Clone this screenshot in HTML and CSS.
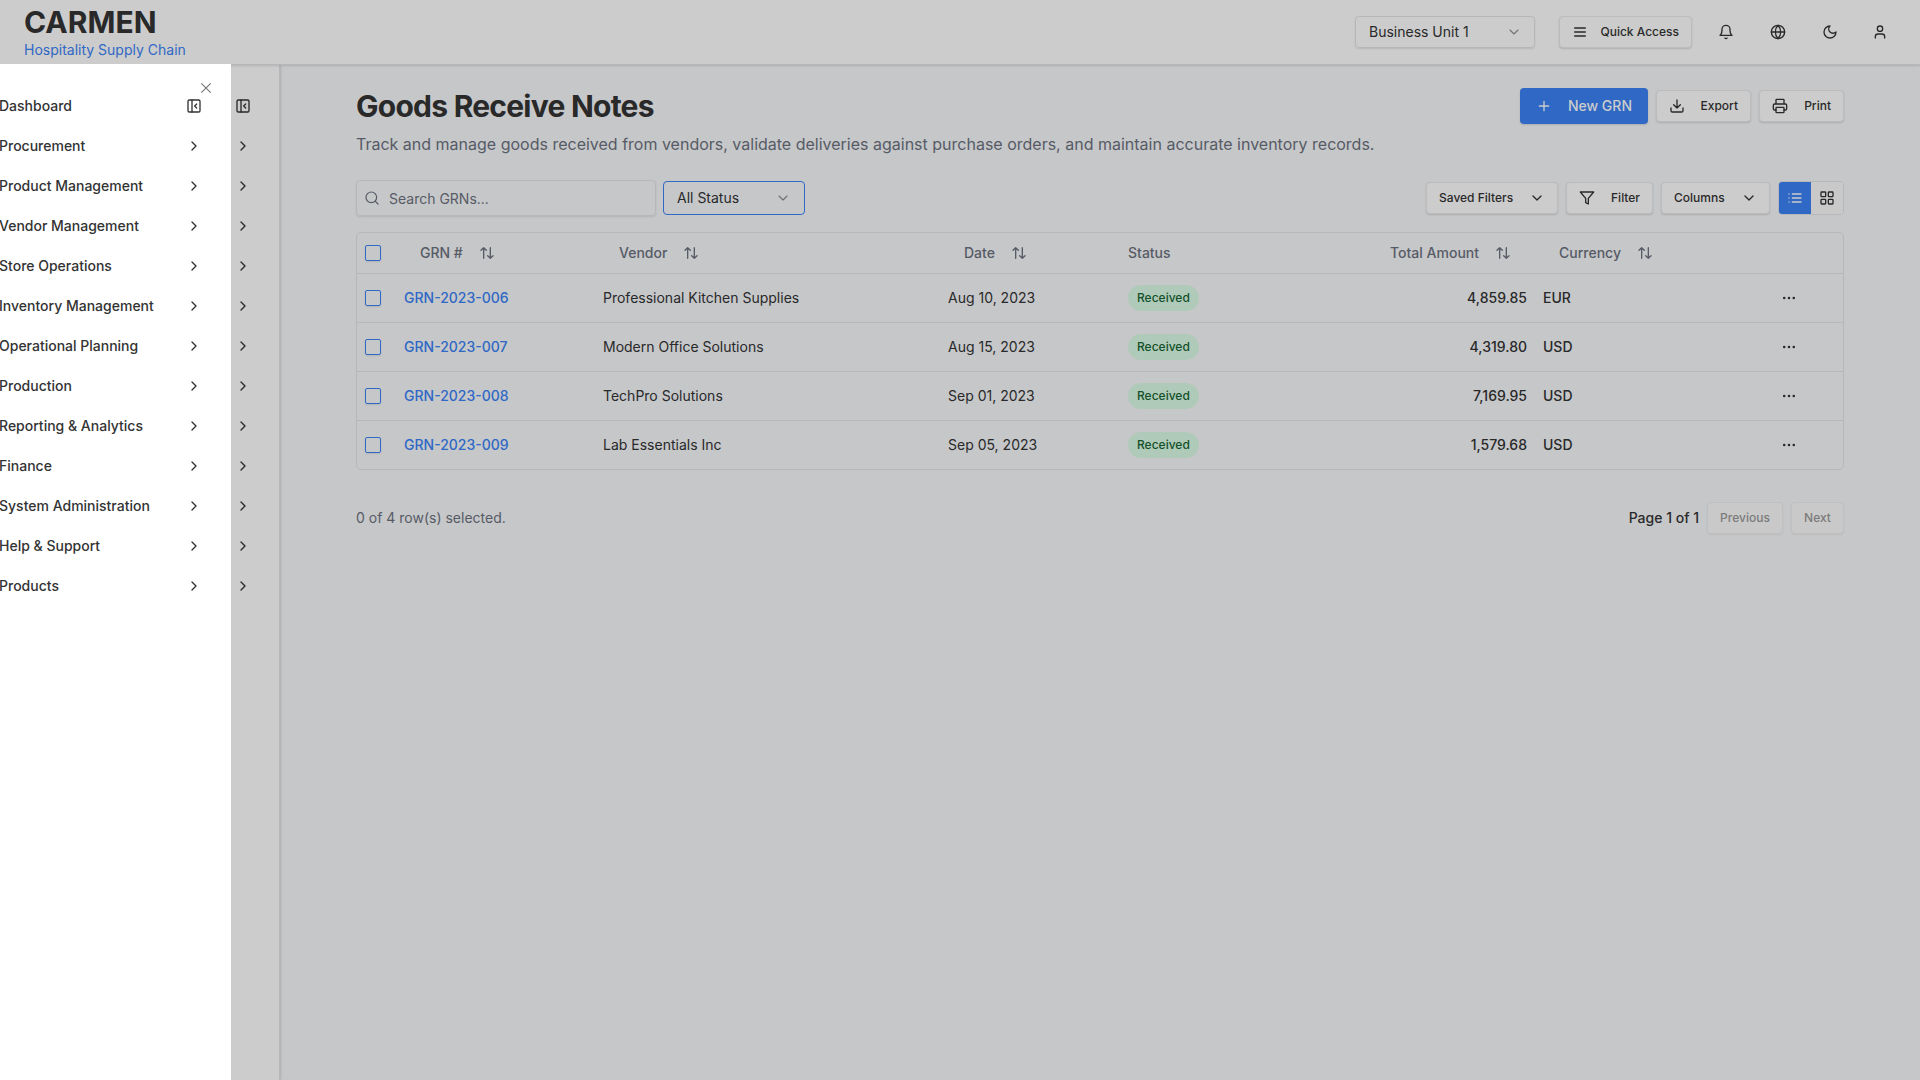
FILE: index.html
```
<!DOCTYPE html>
<html lang="en">
<head>
<meta charset="utf-8">
<title>Goods Receive Notes</title>
<link rel="stylesheet" href="styles.css">
</head>
<body>
<svg class="sprite" aria-hidden="true">
  <symbol id="chev-r" viewBox="0 0 24 24"><path d="m9 18 6-6-6-6"/></symbol>
  <symbol id="chev-d" viewBox="0 0 24 24"><path d="m6 9 6 6 6-6"/></symbol>
  <symbol id="panel" viewBox="0 0 24 24"><rect width="18" height="18" x="3" y="3" rx="2"/><path d="M9 3v18M16 15l-3-3 3-3"/></symbol>
  <symbol id="bell" viewBox="0 0 24 24"><path d="M6 8a6 6 0 0 1 12 0c0 7 3 9 3 9H3s3-2 3-9"/><path d="M10.3 21a1.94 1.94 0 0 0 3.4 0"/></symbol>
  <symbol id="globe" viewBox="0 0 24 24"><circle cx="12" cy="12" r="10"/><path d="M12 2a14.5 14.5 0 0 0 0 20 14.5 14.5 0 0 0 0-20M2 12h20"/></symbol>
  <symbol id="moon" viewBox="0 0 24 24"><path d="M12 3a6 6 0 0 0 9 9 9 9 0 1 1-9-9Z"/></symbol>
  <symbol id="user" viewBox="0 0 24 24"><path d="M19 21v-2a4 4 0 0 0-4-4H9a4 4 0 0 0-4 4v2"/><circle cx="12" cy="7" r="4"/></symbol>
  <symbol id="menu" viewBox="0 0 24 24"><path d="M4 12h16M4 6h16M4 18h16"/></symbol>
  <symbol id="plus" viewBox="0 0 24 24"><path d="M5 12h14M12 5v14"/></symbol>
  <symbol id="download" viewBox="0 0 24 24"><path d="M21 15v4a2 2 0 0 1-2 2H5a2 2 0 0 1-2-2v-4M7 10l5 5 5-5M12 15V3"/></symbol>
  <symbol id="printer" viewBox="0 0 24 24"><path d="M6 18H4a2 2 0 0 1-2-2v-5a2 2 0 0 1 2-2h16a2 2 0 0 1 2 2v5a2 2 0 0 1-2 2h-2M6 9V3a1 1 0 0 1 1-1h10a1 1 0 0 1 1 1v6"/><rect x="6" y="14" width="12" height="8" rx="1"/></symbol>
  <symbol id="search" viewBox="0 0 24 24"><circle cx="11" cy="11" r="8"/><path d="m21 21-4.3-4.3"/></symbol>
  <symbol id="filter" viewBox="0 0 24 24"><path d="M22 3H2l8 9.46V19l4 2v-8.54L22 3z"/></symbol>
  <symbol id="list" viewBox="0 0 24 24"><path d="M8 6h13M8 12h13M8 18h13M3 6h.01M3 12h.01M3 18h.01"/></symbol>
  <symbol id="grid" viewBox="0 0 24 24"><rect x="3" y="3" width="7" height="7" rx="1"/><rect x="14" y="3" width="7" height="7" rx="1"/><rect x="14" y="14" width="7" height="7" rx="1"/><rect x="3" y="14" width="7" height="7" rx="1"/></symbol>
  <symbol id="sort" viewBox="0 0 24 24"><path d="m21 16-4 4-4-4M17 20V4M3 8l4-4 4 4M7 4v16"/></symbol>
  <symbol id="dots" viewBox="0 0 15 15"><circle cx="3" cy="7.500" r="1.200"/><circle cx="7.500" cy="7.500" r="1.200"/><circle cx="12" cy="7.500" r="1.200"/></symbol>
  <symbol id="cross" viewBox="0 0 24 24"><path d="M5 5l14 14M19 5l-14 14"/></symbol>
</svg>

<header class="topbar">
  <div class="brand">
    <div class="brand-name">CARMEN</div>
    <div class="brand-sub">Hospitality Supply Chain</div>
  </div>
  <div class="top-tools">
    <div class="select unit"><span>Business Unit 1</span><svg class="icon thin"><use href="#chev-d"/></svg></div>
    <button class="btn quick"><svg class="icon"><use href="#menu"/></svg>Quick Access</button>
    <div class="top-icons">
      <svg class="icon"><use href="#bell"/></svg>
      <svg class="icon"><use href="#globe"/></svg>
      <svg class="icon"><use href="#moon"/></svg>
      <svg class="icon user"><use href="#user"/></svg>
    </div>
  </div>
</header>

<div class="body">
  <aside class="rail">
    <svg class="icon"><use href="#panel"/></svg>
    <svg class="icon"><use href="#chev-r"/></svg>
    <svg class="icon"><use href="#chev-r"/></svg>
    <svg class="icon"><use href="#chev-r"/></svg>
    <svg class="icon"><use href="#chev-r"/></svg>
    <svg class="icon"><use href="#chev-r"/></svg>
    <svg class="icon"><use href="#chev-r"/></svg>
    <svg class="icon"><use href="#chev-r"/></svg>
    <svg class="icon"><use href="#chev-r"/></svg>
    <svg class="icon"><use href="#chev-r"/></svg>
    <svg class="icon"><use href="#chev-r"/></svg>
    <svg class="icon"><use href="#chev-r"/></svg>
    <svg class="icon"><use href="#chev-r"/></svg>
  </aside>

  <main class="main">
    <div class="title-row">
      <h1>Goods Receive Notes</h1>
      <div class="actions">
        <button class="btn primary"><svg class="icon"><use href="#plus"/></svg>New GRN</button>
        <button class="btn export"><svg class="icon"><use href="#download"/></svg>Export</button>
        <button class="btn print"><svg class="icon"><use href="#printer"/></svg>Print</button>
      </div>
    </div>
    <p class="lead">Track and manage goods received from vendors, validate deliveries against purchase orders, and maintain accurate inventory records.</p>

    <div class="toolbar">
      <div class="search"><svg class="icon"><use href="#search"/></svg><span>Search GRNs...</span></div>
      <div class="select status"><span>All Status</span><svg class="icon thin"><use href="#chev-d"/></svg></div>
      <div class="filters">
        <button class="btn saved">Saved Filters<svg class="icon"><use href="#chev-d"/></svg></button>
        <button class="btn filter"><svg class="icon"><use href="#filter"/></svg>Filter</button>
        <button class="btn columns">Columns<svg class="icon"><use href="#chev-d"/></svg></button>
        <div class="views">
          <span class="view on"><svg class="icon"><use href="#list"/></svg></span>
          <span class="view"><svg class="icon"><use href="#grid"/></svg></span>
        </div>
      </div>
    </div>

    <section class="table">
      <div class="row head">
        <i class="check"></i>
        <span class="sortable">GRN #<svg class="icon"><use href="#sort"/></svg></span>
        <span class="sortable">Vendor<svg class="icon"><use href="#sort"/></svg></span>
        <span class="sortable">Date<svg class="icon"><use href="#sort"/></svg></span>
        <span>Status</span>
        <span class="sortable end">Total Amount<svg class="icon"><use href="#sort"/></svg></span>
        <span class="sortable">Currency<svg class="icon"><use href="#sort"/></svg></span>
        <span></span>
      </div>
      <div class="row">
        <i class="check"></i><a class="link">GRN-2023-006</a><span>Professional Kitchen Supplies</span><span>Aug 10, 2023</span>
        <span><b class="badge">Received</b></span><span class="amount">4,859.85</span><span class="cur">EUR</span><svg class="icon dots"><use href="#dots"/></svg>
      </div>
      <div class="row">
        <i class="check"></i><a class="link">GRN-2023-007</a><span>Modern Office Solutions</span><span>Aug 15, 2023</span>
        <span><b class="badge">Received</b></span><span class="amount">4,319.80</span><span class="cur">USD</span><svg class="icon dots"><use href="#dots"/></svg>
      </div>
      <div class="row">
        <i class="check"></i><a class="link">GRN-2023-008</a><span>TechPro Solutions</span><span>Sep 01, 2023</span>
        <span><b class="badge">Received</b></span><span class="amount">7,169.95</span><span class="cur">USD</span><svg class="icon dots"><use href="#dots"/></svg>
      </div>
      <div class="row">
        <i class="check"></i><a class="link">GRN-2023-009</a><span>Lab Essentials Inc</span><span>Sep 05, 2023</span>
        <span><b class="badge">Received</b></span><span class="amount">1,579.68</span><span class="cur">USD</span><svg class="icon dots"><use href="#dots"/></svg>
      </div>
    </section>

    <footer class="pager">
      <span class="count">0 of 4 row(s) selected.</span>
      <span class="page">Page 1 of 1</span>
      <button class="btn off prev">Previous</button>
      <button class="btn off next">Next</button>
    </footer>
  </main>
</div>

<nav class="drawer">
  <svg class="close"><use href="#cross"/></svg>
  <div class="item"><span>Dashboard</span><svg class="icon"><use href="#panel"/></svg></div>
  <div class="item"><span>Procurement</span><svg class="icon"><use href="#chev-r"/></svg></div>
  <div class="item"><span>Product Management</span><svg class="icon"><use href="#chev-r"/></svg></div>
  <div class="item"><span>Vendor Management</span><svg class="icon"><use href="#chev-r"/></svg></div>
  <div class="item"><span>Store Operations</span><svg class="icon"><use href="#chev-r"/></svg></div>
  <div class="item"><span>Inventory Management</span><svg class="icon"><use href="#chev-r"/></svg></div>
  <div class="item"><span>Operational Planning</span><svg class="icon"><use href="#chev-r"/></svg></div>
  <div class="item"><span>Production</span><svg class="icon"><use href="#chev-r"/></svg></div>
  <div class="item"><span>Reporting &amp; Analytics</span><svg class="icon"><use href="#chev-r"/></svg></div>
  <div class="item"><span>Finance</span><svg class="icon"><use href="#chev-r"/></svg></div>
  <div class="item"><span>System Administration</span><svg class="icon"><use href="#chev-r"/></svg></div>
  <div class="item"><span>Help &amp; Support</span><svg class="icon"><use href="#chev-r"/></svg></div>
  <div class="item"><span>Products</span><svg class="icon"><use href="#chev-r"/></svg></div>
</nav>
</body>
</html>
```

FILE: styles.css
```
:root {
  --ink: #292929;
  --muted: #565b66;
  --line: #b5b7ba;
  --blue: #2f68c5;
  --surface: #cccccc;
  --page: #c6c7c9;
}
* { box-sizing: border-box; }
body {
  margin: 0;
  height: 1080px;
  overflow: hidden;
  display: flex;
  flex-direction: column;
  background: var(--page);
  color: var(--ink);
  font: 400 14px/20px Inter, "Liberation Sans", sans-serif;
}
.sprite { display: none; }
.icon {
  width: 16px;
  height: 16px;
  flex: none;
  fill: none;
  stroke: currentColor;
  stroke-width: 2;
  stroke-linecap: round;
  stroke-linejoin: round;
}
.icon.thin { stroke-width: 1.6; opacity: .55; }

/* Top bar */
.topbar {
  height: 65px;
  flex: none;
  display: flex;
  justify-content: space-between;
  padding: 0 32px 0 24px;
  background: var(--surface);
  border-bottom: 1px solid #b5b7ba;
  box-shadow: 0 1px 2px rgba(0, 0, 0, .12);
  position: relative;
  z-index: 1;
}
.brand-name { font-size: 30px; line-height: 36px; font-weight: 700; padding-top: 4px; }
.brand-sub { color: var(--blue); }
.top-tools { display: flex; align-items: center; height: 64px; }
.top-icons { display: flex; gap: 36px; margin-left: 26px; }
.top-icons .user { margin-left: -2px; }
.select {
  display: flex;
  align-items: center;
  justify-content: space-between;
  border: 1px solid var(--line);
  border-radius: 4px;
}
.unit { width: 180px; height: 32px; padding: 0 12px 0 13px; margin-right: 24px; box-shadow: 0 1px 2px rgba(0, 0, 0, .1); }

.btn {
  display: flex;
  align-items: center;
  justify-content: space-between;
  height: 32px;
  padding: 0 12px;
  border: 1px solid #bbbcbe;
  border-radius: 4px;
  background: var(--surface);
  color: var(--ink);
  font: 500 12px/16px Inter, "Liberation Sans", sans-serif;
  white-space: nowrap;
  box-shadow: 0 1px 2px rgba(0, 0, 0, .14);
}
.quick { width: 133px; }

/* Body */
.body { flex: 1; display: flex; min-height: 0; }
.rail {
  width: 280px;
  flex: none;
  display: flex;
  flex-direction: column;
  align-items: flex-end;
  gap: 24px;
  padding: 33px 28px 0 0;
  background: var(--surface);
  border-right: 1px solid #b5b7ba;
  box-shadow: 1px 0 2px rgba(0, 0, 0, .12);
}
.main { flex: 1; padding: 23px 76px 0; }
.title-row { display: flex; justify-content: space-between; align-items: center; height: 36px; }
h1 { margin: 0; font-size: 30px; line-height: 36px; font-weight: 700; letter-spacing: -.75px; }
.actions { display: flex; align-items: center; gap: 8px; }
.primary { width: 128px; height: 36px; padding: 0 16px; border: 0; background: var(--blue); color: #cccccc; font-size: 14px; }
.export { width: 95px; }
.print { width: 85px; }
.lead { margin: 8px 0 0; font-size: 16px; line-height: 24px; color: var(--muted); }

.toolbar { display: flex; align-items: center; height: 36px; margin-top: 24px; }
.search {
  width: 300px;
  height: 36px;
  display: flex;
  align-items: center;
  gap: 9px;
  padding-left: 7px;
  margin-right: 7px;
  border: 1px solid var(--line);
  border-radius: 4px;
  color: var(--muted);
  box-shadow: 0 1px 2px rgba(0, 0, 0, .1);
}
.search .icon { stroke-width: 1.8; }
.search span { padding-top: 2px; }
.status { width: 142px; height: 34px; padding: 0 13px; border-color: var(--blue); }
.filters { display: flex; align-items: center; gap: 8px; margin-left: auto; }
.saved { width: 132px; }
.filter { width: 87px; }
.columns { width: 109px; }
.views { display: flex; width: 66px; height: 34px; border: 1px solid var(--line); border-radius: 4px; overflow: hidden; }
.view { width: 32px; display: flex; align-items: center; justify-content: center; background: #c9c9c9; }
.view.on { background: var(--blue); color: #cccccc; }

/* Table */
.table { margin-top: 16px; border: 1px solid var(--line); border-radius: 5px; }
.row {
  display: grid;
  grid-template-columns: 39px 199px 345px 180px 186px 229px 208px 1fr;
  align-items: center;
  height: 49px;
  border-bottom: 1px solid var(--line);
}
.row:last-child { height: 48px; border-bottom: 0; }
.row > span, .row > a { padding: 0 8px; }
.row.head { height: 41px; color: var(--muted); font-weight: 500; }
.row.head .sortable { display: flex; align-items: center; gap: 16px; padding: 0 24px; }
.row.head .end { justify-content: flex-end; }
.check { width: 16px; height: 16px; margin-left: 8px; border: 1px solid var(--blue); border-radius: 2px; box-shadow: 0 1px 2px rgba(0, 0, 0, .1); }
.link { color: var(--blue); font-weight: 500; }
.badge { display: inline-block; padding: 5px 9px; border-radius: 13px; background: #b0cab9; color: #12512a; font: 500 12px/16px Inter, sans-serif; vertical-align: middle; }
.amount { text-align: right; font-weight: 500; }
.cur { font-weight: 500; }
.dots { margin-left: 38px; fill: currentColor; stroke: none; }

.pager { display: flex; align-items: center; margin-top: 32px; height: 32px; }
.count { flex: 1; color: var(--muted); }
.page { font-weight: 500; margin-right: 8px; }
.off { justify-content: center; color: #7b7b7b; background: #c9c9c9; border-color: #bfc0c2; box-shadow: 0 1px 2px rgba(0, 0, 0, .06); }
.prev { width: 76px; margin-right: 8px; }
.next { width: 53px; }

/* Slide-over navigation */
.drawer {
  position: absolute;
  left: 0;
  top: 64px;
  z-index: 2;
  width: 231px;
  height: 1016px;
  padding-top: 22px;
  background: #ffffff;
  color: #333333;
  font-weight: 500;
}
.item { display: flex; align-items: center; justify-content: space-between; height: 40px; padding-right: 29px; white-space: nowrap; }
.item span { margin-left: -1px; }
.close { position: absolute; top: 16px; right: 17px; width: 16px; height: 16px; stroke: #777777; stroke-width: 1.8; }
```
